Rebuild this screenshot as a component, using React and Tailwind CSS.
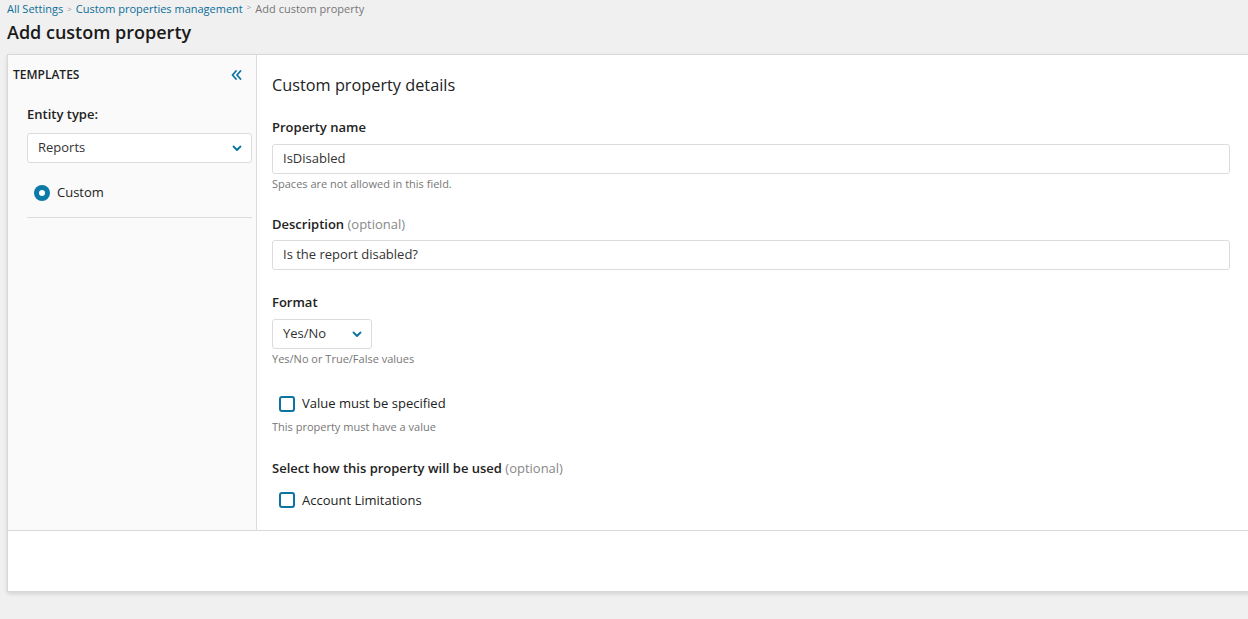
import React from 'react';

const Chevron = ({ className }) => (
  <svg className={className} width="10" height="7" viewBox="0 0 10 7" fill="none">
    <path d="M1.5 1.5L5 5L8.5 1.5" stroke="#0b74a0" strokeWidth="1.8" strokeLinecap="round" strokeLinejoin="round" />
  </svg>
);

const Checkbox = ({ label }) => (
  <label className="flex items-center gap-[7px] ml-[7px] text-[13px] text-[#222]">
    <span className="w-4 h-4 rounded-[3px] border-2 border-[#0b74a0] bg-white" />
    {label}
  </label>
);

const Label = ({ children, optional }) => (
  <div className="text-[13px] font-semibold text-[#222] leading-[18px]">
    {children}
    {optional && <span className="font-normal text-[#888]"> (optional)</span>}
  </div>
);

const Help = ({ children }) => (
  <div className="text-[11px] text-[#777] leading-[14px] mt-[3px]">{children}</div>
);

export default function App() {
  return (
    <div className="min-h-[619px] w-full overflow-hidden bg-[#f0f0f0] font-['Open_Sans',sans-serif] text-[#222]">
      {/* breadcrumb */}
      <div className="flex items-center px-[7px] pt-[1px] text-[11px] leading-[16px]">
        <span className="text-[#0b6e99]">All Settings</span>
        <span className="mx-[4px] text-[#999] text-[8px]">&gt;</span>
        <span className="text-[#0b6e99]">Custom properties management</span>
        <span className="mx-[4px] text-[#999] text-[8px] -mt-[4px]">&gt;</span>
        <span className="text-[#777]">Add custom property</span>
      </div>
      <h1 className="px-[7px] pt-[3px] text-[18px] font-semibold leading-[24px] text-[#1a1a1a]">Add custom property</h1>

      <div className="ml-[7px] mt-[10px] w-[1260px] bg-white border border-[#d8d8d8] border-r-0 shadow-[0_2px_4px_rgba(0,0,0,0.12)]">
        <div className="flex h-[476px] border-b border-[#d8d8d8]">
          {/* sidebar */}
          <aside className="w-[249px] shrink-0 bg-[#fafafa] border-r border-[#dcdcdc]">
            <div className="flex items-center justify-between pl-[5px] pr-[14px] pt-[11px]">
              <span className="text-[12px] font-semibold text-[#222]">TEMPLATES</span>
              <svg width="11" height="10" viewBox="0 0 11 10" fill="none">
                <path d="M5 1L1.5 5L5 9M9.5 1L6 5L9.5 9" stroke="#0b74a0" strokeWidth="1.8" strokeLinecap="round" strokeLinejoin="round" />
              </svg>
            </div>
            <div className="pl-[19px] pr-[4px]">
              <div className="mt-[21px] text-[13px] font-semibold leading-[18px]">Entity type:</div>
              <div className="mt-[10px] h-[30px] flex items-center justify-between bg-white border border-[#dcdcdc] rounded-[3px] pl-[10px] pr-[9px] text-[13px] text-[#333]">
                Reports
                <Chevron />
              </div>
              <div className="flex items-center gap-[7px] ml-[7px] mt-[20px] text-[13px]">
                <span className="w-4 h-4 rounded-full bg-[#0b7aa8] flex items-center justify-center">
                  <span className="w-[6px] h-[6px] rounded-full bg-white" />
                </span>
                Custom
              </div>
              <div className="mt-[14px] border-t border-[#dcdcdc]" />
            </div>
          </aside>

          {/* main */}
          <main className="flex-1 pl-[15px] pr-[30px]">
            <div className="w-[958px]">
              <h2 className="mt-[19px] text-[16.3px] font-medium leading-[22px] text-[#222]">Custom property details</h2>

              <div className="mt-[22px]">
                <Label>Property name</Label>
              </div>
              <div className="mt-[8px] h-[30px] flex items-center border border-[#dcdcdc] rounded-[3px] px-[10px] text-[13px] text-[#333]">IsDisabled</div>
              <Help>Spaces are not allowed in this field.</Help>

              <div className="mt-[24px]">
                <Label optional>Description</Label>
              </div>
              <div className="mt-[7px] h-[30px] flex items-center border border-[#dcdcdc] rounded-[3px] px-[10px] text-[13px] text-[#333]">Is the report disabled?</div>

              <div className="mt-[23px]">
                <Label>Format</Label>
              </div>
              <div className="mt-[8px] w-[100px] h-[30px] flex items-center justify-between border border-[#dcdcdc] rounded-[3px] pl-[10px] pr-[9px] text-[13px] text-[#333]">
                Yes/No
                <Chevron />
              </div>
              <Help>Yes/No or True/False values</Help>

              <div className="mt-[28px]">
                <Checkbox label="Value must be specified" />
              </div>
              <div className="mt-[6px] text-[11px] text-[#777] leading-[14px]">This property must have a value</div>

              <div className="mt-[25px]">
                <Label optional>Select how this property will be used</Label>
              </div>
              <div className="mt-[14px]">
                <Checkbox label="Account Limitations" />
              </div>
            </div>
          </main>
        </div>
        <div className="h-[60px] bg-white" />
      </div>
    </div>
  );
}
